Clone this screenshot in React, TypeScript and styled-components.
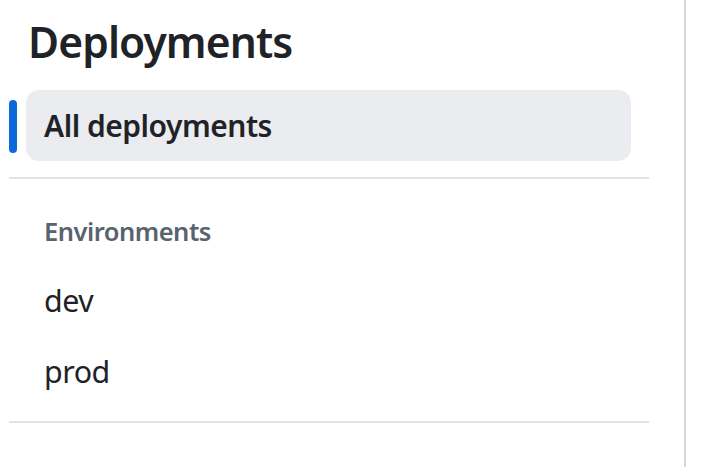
import React from "react";
import styled, { createGlobalStyle } from "styled-components";

const GlobalStyle = createGlobalStyle`
  html, body {
    margin: 0;
    padding: 0;
    background: #ffffff;
  }
  body {
    font-family: "Noto Sans", "Open Sans", sans-serif;
    color: #1f2328;
  }
`;

const Page = styled.div`
  display: flex;
  height: 467px;
  overflow: hidden;
`;

const Sidebar = styled.aside`
  width: 686px;
  flex: none;
  border-right: 2px solid #d1d9e0;
  padding: 0 35px 0 9px;
  box-sizing: border-box;
  display: flex;
  flex-direction: column;
`;

const Heading = styled.h2`
  margin: 14px 0 0 19px;
  font-size: 42.5px;
  line-height: 55px;
  font-weight: 600;
  letter-spacing: -0.9px;
`;

const NavList = styled.ul`
  list-style: none;
  margin: 21px 0 0 0;
  padding: 0;
  display: flex;
  flex-direction: column;
`;

const NavItem = styled.li<{ $active?: boolean }>`
  position: relative;
  margin-left: 17px;
  width: 605px;
  height: 71px;
  border-radius: 13px;
  padding-left: 18px;
  box-sizing: border-box;
  display: flex;
  align-items: center;
  font-size: ${(p) => (p.$active ? "30px" : "30.4px")};
  letter-spacing: ${(p) => (p.$active ? "-0.5px" : "-0.5px")};
  font-weight: ${(p) => (p.$active ? 600 : 400)};
  background: ${(p) => (p.$active ? "#ebecef" : "transparent")};
  color: #1f2328;
`;

const ActiveBar = styled.span`
  position: absolute;
  left: -17px;
  top: 10px;
  width: 8px;
  height: 53px;
  border-radius: 6px;
  background: #0969da;
`;

const Divider = styled.hr<{ $top: number }>`
  border: none;
  height: 2px;
  background: #dfe4e9;
  margin: ${(p) => p.$top}px 0 0 0;
  width: 640px;
`;

const GroupHeading = styled.div`
  margin: 33px 0 0 35px;
  font-size: 25.5px;
  line-height: 39.6px;
  font-weight: 600;
  letter-spacing: -0.5px;
  color: #59636e;
`;

const GroupList = styled.ul`
  list-style: none;
  margin: 13px 0 0 0;
  padding: 0;
  display: flex;
  flex-direction: column;
`;

const Content = styled.main`
  flex: 1;
  background: #ffffff;
`;

export default function App() {
  return (
    <>
      <GlobalStyle />
      <Page>
        <Sidebar>
          <Heading>Deployments</Heading>
          <NavList>
            <NavItem $active>
              <ActiveBar />
              All deployments
            </NavItem>
          </NavList>
          <Divider $top={16} />
          <GroupHeading>Environments</GroupHeading>
          <GroupList>
            <NavItem>dev</NavItem>
            <NavItem>prod</NavItem>
          </GroupList>
          <Divider $top={14} />
        </Sidebar>
        <Content />
      </Page>
    </>
  );
}
